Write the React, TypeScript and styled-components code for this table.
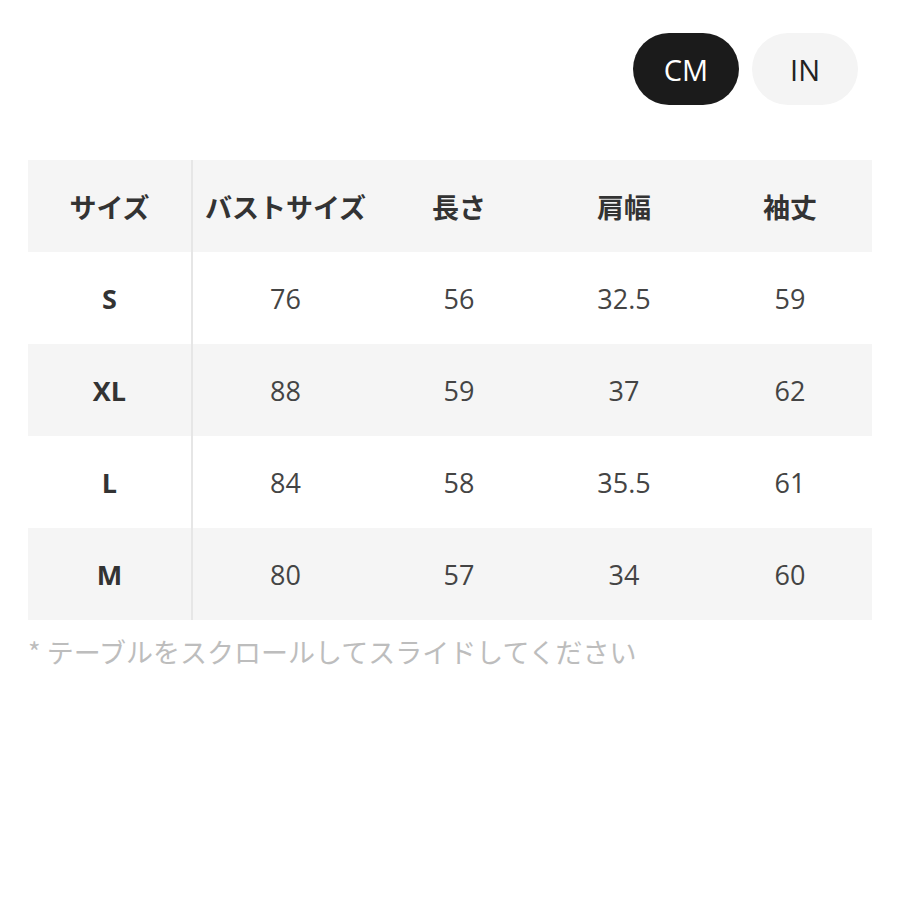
import styled, { createGlobalStyle } from 'styled-components';

const GlobalStyle = createGlobalStyle`
  body {
    margin: 0;
    background: #ffffff;
    font-family: "Open Sans", "Noto Sans CJK JP", sans-serif;
  }
`;

const Page = styled.div`
  width: 900px;
  padding: 33px 28px 0 28px;
  box-sizing: border-box;
`;

const UnitBar = styled.div`
  display: flex;
  justify-content: flex-end;
  gap: 13px;
  padding-right: 14px;
`;

const UnitButton = styled.button<{ $active?: boolean }>`
  width: 106px;
  height: 72px;
  border: none;
  border-radius: 36px;
  background: ${(p) => (p.$active ? '#1b1b1b' : '#f4f4f4')};
  color: ${(p) => (p.$active ? '#ffffff' : '#222222')};
  font-family: "Open Sans", "Noto Sans CJK JP", sans-serif;
  font-size: 29px;
  padding: 0;
  cursor: pointer;
`;

const Table = styled.table`
  margin-top: 55px;
  width: 844px;
  border-collapse: collapse;
  table-layout: fixed;
`;

const Row = styled.tr<{ $shaded?: boolean }>`
  height: 92px;
  background: ${(p) => (p.$shaded ? '#f5f5f5' : '#ffffff')};
`;

const HeadCell = styled.th<{ $first?: boolean }>`
  font-family: "Noto Sans CJK JP", sans-serif;
  font-weight: 700;
  font-size: 27px;
  color: #333333;
  text-align: center;
  padding: 0;
  border-right: ${(p) => (p.$first ? '2px solid #e6e6e6' : 'none')};
`;

const Cell = styled.td<{ $first?: boolean }>`
  font-family: "Open Sans", "Noto Sans CJK JP", sans-serif;
  font-weight: ${(p) => (p.$first ? 700 : 400)};
  font-size: 27px;
  color: ${(p) => (p.$first ? '#333333' : '#444444')};
  text-align: center;
  padding: 0;
  border-right: ${(p) => (p.$first ? '2px solid #e6e6e6' : 'none')};
`;

const Note = styled.p`
  margin: 12px 0 0 0;
  font-family: "Noto Sans CJK JP", sans-serif;
  font-size: 27px;
  line-height: 40px;
  color: #bdbdbd;
`;

const headers = ['サイズ', 'バストサイズ', '長さ', '肩幅', '袖丈'];
const widths = [164, 186, 162, 168, 164];
const rows = [
  ['S', '76', '56', '32.5', '59'],
  ['XL', '88', '59', '37', '62'],
  ['L', '84', '58', '35.5', '61'],
  ['M', '80', '57', '34', '60'],
];

const App = () => (
  <Page>
    <GlobalStyle />
    <UnitBar>
      <UnitButton $active>CM</UnitButton>
      <UnitButton>IN</UnitButton>
    </UnitBar>
    <Table>
      <colgroup>
        {widths.map((w, i) => (
          <col key={i} style={{ width: w }} />
        ))}
      </colgroup>
      <thead>
        <Row $shaded>
          {headers.map((h, i) => (
            <HeadCell key={h} $first={i === 0}>{h}</HeadCell>
          ))}
        </Row>
      </thead>
      <tbody>
        {rows.map((r, ri) => (
          <Row key={r[0]} $shaded={ri % 2 === 1}>
            {r.map((v, i) => (
              <Cell key={i} $first={i === 0}>{v}</Cell>
            ))}
          </Row>
        ))}
      </tbody>
    </Table>
    <Note>* テーブルをスクロールしてスライドしてください</Note>
  </Page>
);

export default App;
